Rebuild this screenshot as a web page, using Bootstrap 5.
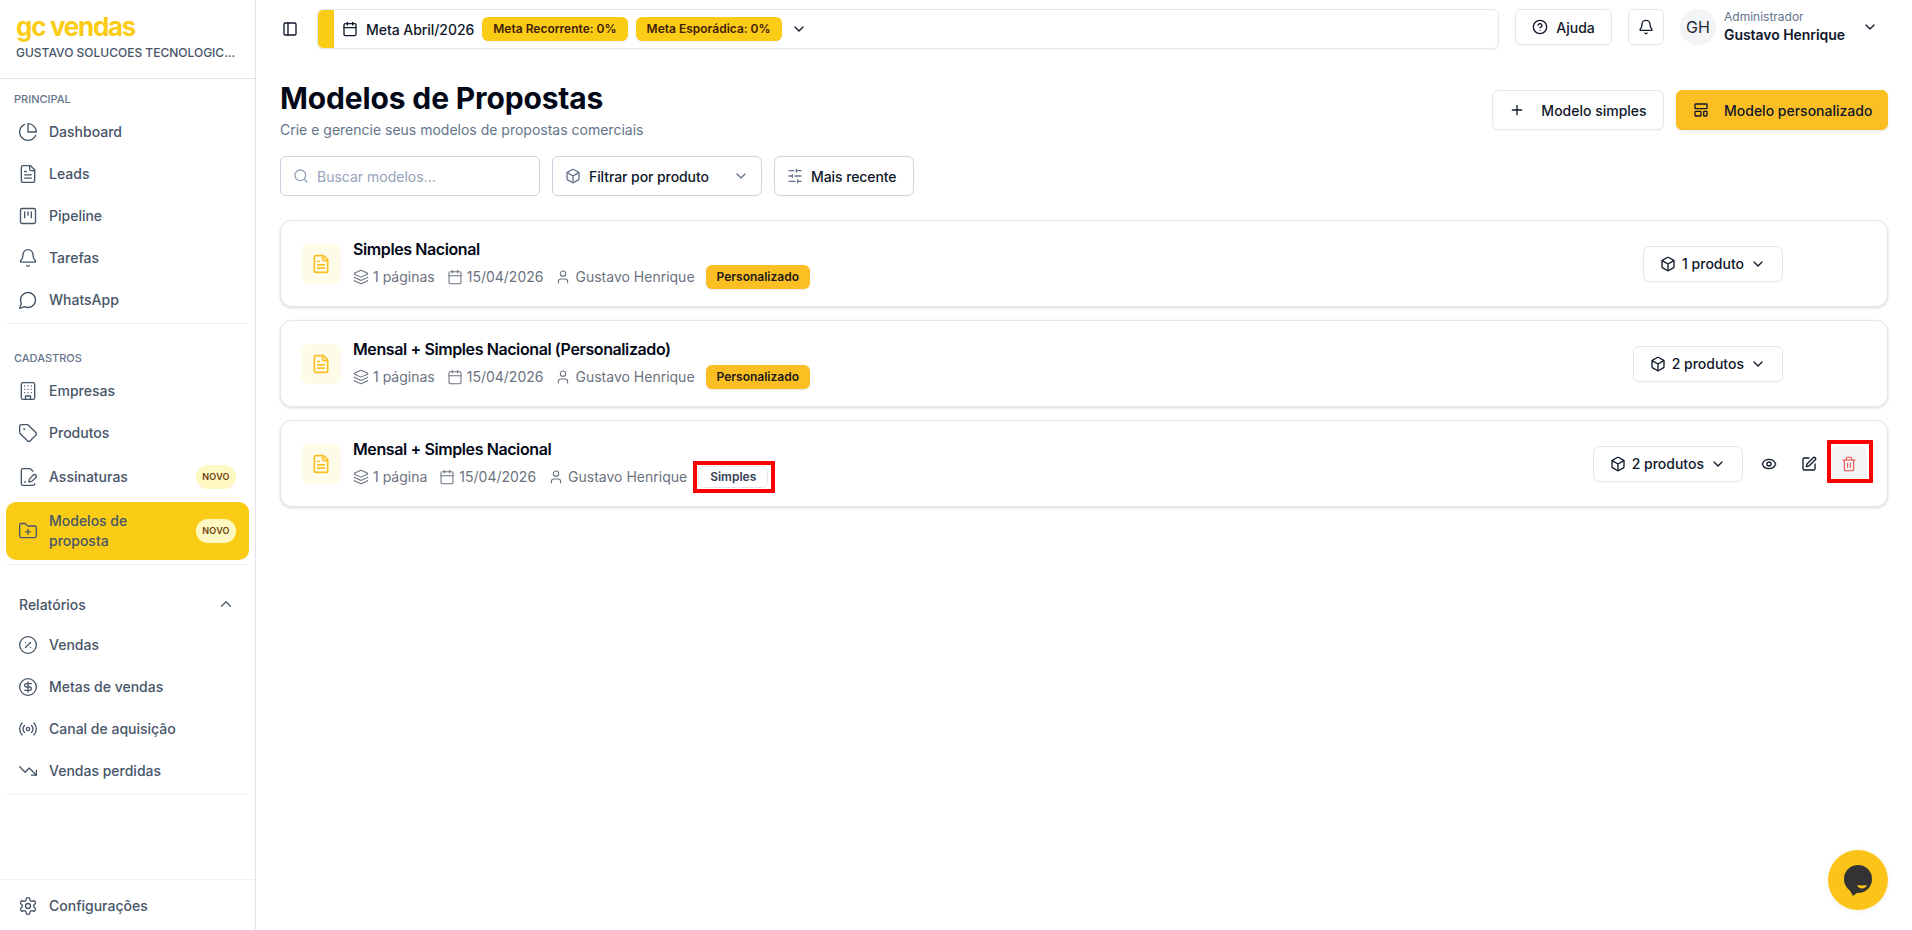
<!DOCTYPE html>
<html lang="pt-BR">
<head>
<meta charset="utf-8">
<title>Modelos de Propostas</title>
<link rel="stylesheet" href="https://cdn.jsdelivr.net/npm/bootstrap@5.3.0/dist/css/bootstrap.min.css">
<style>
html,body{height:100%}
body{font-family:Inter,"Liberation Sans",sans-serif;color:#0f172a;background:#fff;font-size:14px;overflow:hidden}
.ico{fill:none;stroke:currentColor;stroke-width:2;stroke-linecap:round;stroke-linejoin:round;flex:none}
.i16{width:16px;height:16px}.i18{width:18px;height:18px}.i20{width:20px;height:20px}
.thin{stroke-width:1.6}
.rail{width:256px;flex:none;border-right:1px solid #e2e4e9;height:930px}
.brandbox{height:79px;padding:12px 16px 0;border-bottom:1px solid #e2e4e9}
.brandname{font-size:26px;line-height:30px;font-weight:700;letter-spacing:-1.3px;color:#facc15}
.brandsub{font-size:12px;line-height:16px;font-weight:500;color:#475569;margin-top:3px;white-space:nowrap}
.navgroup{padding:0 6px}
.navhead{font-size:11px;line-height:16px;font-weight:500;color:#64748b;padding-left:10px;text-transform:uppercase}
.navhead.first{margin-top:12px;margin-bottom:4px}
.navhead.second{margin-top:26px;margin-bottom:4px}
.navitem{display:flex;align-items:center;gap:11px;height:42px;padding-left:12px;padding-right:13px;color:#475569;font-weight:500;font-size:14px;text-decoration:none;border-radius:10px;line-height:20px}
.navitem.tall{height:46px}
.navitem.sel{height:58px;margin-top:2px;background:#facc15;color:#475569}
.navitem .grow{flex:1}
.novo{background:#fef9c3;color:#713f12;font-size:9px;font-weight:600;border-radius:12px;width:40px;height:24px;display:flex;align-items:center;justify-content:center;letter-spacing:.2px}
.navrule{height:1px;background:#f1f1f1;margin:2px 0 0}
.relhead{display:flex;justify-content:space-between;align-items:center;padding:0 20px 0 19px;margin-top:29px;margin-bottom:10px;height:20px;color:#475569;font-weight:500;font-size:14px}
.railfoot{border-top:1px solid #f1f1f1;padding:5px 6px 0;margin-top:auto;height:51px}
.topstrip{height:58px;padding:9px 34px 0 0}
.toggler{width:61px;padding-left:26px;color:#0f172a;height:40px;display:flex;align-items:center}
.metabar{flex:1;height:40px;border:1px solid #e2e8f0;border-radius:6px;box-shadow:0 1px 2px rgba(0,0,0,.05);overflow:hidden;display:flex;align-items:center}
.metastrip{width:16px;height:100%;background:#facc15;margin-right:8px}
.metatitle{font-weight:500;font-size:14px;margin:0 8px 0 8px;letter-spacing:-.05px}
.metapill{background:#facc15;color:#422006;font-size:12px;font-weight:600;height:24px;line-height:24px;padding:0 11px;border-radius:6px;margin-right:8px;box-shadow:0 1px 2px rgba(0,0,0,.06)}
.metachev{margin-left:1px}
.softbtn{background:#fff;border:1px solid #e2e8f0;border-radius:6px;color:#0f172a;font-size:14px;font-weight:500;display:inline-flex;align-items:center;padding:0;white-space:nowrap;box-shadow:0 1px 1px rgba(0,0,0,.03)}
.helpbtn{width:97px;height:36px;justify-content:center;gap:8px;margin-left:16px}
.bellbtn{width:36px;height:36px;justify-content:center;margin-left:16px}
.avatarchip{width:36px;height:36px;border-radius:50%;background:#f3f4f6;margin-left:16px;font-size:16px;color:#1f2937;display:flex;align-items:center;justify-content:center}
.userbox{margin-left:8px;width:138px;line-height:18px}
.userrole{font-size:12px;color:#64748b;line-height:16px}
.username{font-size:14px;font-weight:600;line-height:20px;color:#0f172a;letter-spacing:-.05px}
.workarea{padding:0 24px}
.pagetitle{font-size:30px;line-height:36px;font-weight:700;color:#020817;margin:22px 0 4px;letter-spacing:-.15px}
.pagesub{font-size:14px;line-height:20px;color:#64748b;margin:0}
.headbtn{height:40px;font-size:14px;font-weight:500;padding:0 16px}
.btnsimple{width:172px;justify-content:center;gap:16px;margin-right:12px}
.btncustom{width:212px;gap:15px;background:#fbbf24;border-color:#fbbf24;box-shadow:0 1px 3px rgba(0,0,0,.1)}
.toolsrow{margin-top:16px;gap:12px}
.searchfield{width:260px;height:40px;border:1px solid #cbd5e1;border-radius:6px;padding:0 12px;gap:8px;color:#94a3b8;display:flex;align-items:center;font-size:14px}
.filterbtn{width:210px;height:40px;padding:0 12px;gap:8px;border-color:#cbd5e1;letter-spacing:-.08px}
.filterbtn .spread{flex:1;text-align:left}
.sortbtn{width:140px;height:40px;padding:0 12px;gap:8px;border-color:#cbd5e1;letter-spacing:-.08px}
.muted{color:#64748b}
.stack{margin-top:24px;gap:13px}
.tplcard{height:87px;border:1px solid #e5e7eb;border-radius:12px;box-shadow:0 1px 3px rgba(0,0,0,.16);background:#fff;padding:0 20px 0 20px;display:flex;align-items:center}
.fileicon{width:40px;height:40px;background:#fefce8;border-radius:8px;color:#fbbf24;display:flex;align-items:center;justify-content:center;margin-right:12px}
.tpltitle{font-size:16px;font-weight:600;line-height:24px;color:#020817;letter-spacing:-.4px;margin-top:-1px}
.tplmeta{display:flex;align-items:center;color:#6b7280;font-size:14px;line-height:24px;margin-top:4px}
.metaone{display:flex;align-items:center;gap:4px;margin-right:12px}
.tagcustom{background:#fbbf24;color:#1c1917;font-size:12px;font-weight:600;padding:0 11px;height:24px;line-height:24px;border-radius:6px;margin-left:-1px;box-shadow:0 1px 2px rgba(0,0,0,.1)}
.tagplain{position:relative;background:#fff;border:1px solid #e2e8f0;color:#334155;font-size:12px;font-weight:600;padding:0 11px;height:22px;line-height:20px;border-radius:6px;margin-left:-1px}
.tagplain::after{content:"";position:absolute;left:-6px;right:-8px;top:-6px;bottom:-6px;border:4px solid #f00}
.prodbtn{height:36px;padding:0 16px;gap:6px;justify-content:center}
.prodplace{margin-right:84px}
.actbtn{width:36px;height:36px;display:flex;align-items:center;justify-content:center;color:#0f172a;border-radius:6px;margin-left:4px}
.actbtn.first{margin-left:8px}
.actbtn.danger{position:relative;color:#ef4444;background:#f3f4f6}
.actbtn.danger::after{content:"";position:absolute;left:-4px;right:-6px;top:-6px;bottom:-1px;border:4px solid #f00;border-radius:1px}
.chatbubble{position:fixed;right:24px;bottom:20px;width:60px;height:60px;border-radius:50%;background:#fcc419;box-shadow:0 1px 6px rgba(0,0,0,.06)}
</style>
</head>
<body class="d-flex">
<svg class="d-none" xmlns="http://www.w3.org/2000/svg">
<symbol id="panel" viewBox="0 0 24 24"><rect x="3" y="3" width="18" height="18" rx="2"/><path d="M9 3v18"/></symbol>
<symbol id="cal" viewBox="0 0 24 24"><path d="M8 2v4M16 2v4"/><rect x="3" y="4" width="18" height="18" rx="2"/><path d="M3 10h18"/></symbol>
<symbol id="down" viewBox="0 0 24 24"><path d="m6 9 6 6 6-6"/></symbol>
<symbol id="up" viewBox="0 0 24 24"><path d="m18 15-6-6-6 6"/></symbol>
<symbol id="help" viewBox="0 0 24 24"><circle cx="12" cy="12" r="10"/><path d="M9.09 9a3 3 0 0 1 5.83 1c0 2-3 3-3 3M12 17h.01"/></symbol>
<symbol id="bell" viewBox="0 0 24 24"><path d="M10.268 21a2 2 0 0 0 3.464 0"/><path d="M3.262 15.326A1 1 0 0 0 4 17h16a1 1 0 0 0 .74-1.673C19.41 13.956 18 12.499 18 8A6 6 0 0 0 6 8c0 4.499-1.411 5.956-2.738 7.326"/></symbol>
<symbol id="plus" viewBox="0 0 24 24"><path d="M5 12h14M12 5v14"/></symbol>
<symbol id="tmpl" viewBox="0 0 24 24"><rect x="3" y="3" width="18" height="7" rx="1"/><rect x="3" y="14" width="9" height="7" rx="1"/><rect x="16" y="14" width="5" height="7" rx="1"/></symbol>
<symbol id="search" viewBox="0 0 24 24"><circle cx="11" cy="11" r="8"/><path d="m21 21-4.3-4.3"/></symbol>
<symbol id="box" viewBox="0 0 24 24"><path d="M21 8a2 2 0 0 0-1-1.730l-7-4a2 2 0 0 0-2 0l-7 4A2 2 0 0 0 3 8v8a2 2 0 0 0 1 1.730l7 4a2 2 0 0 0 2 0l7-4A2 2 0 0 0 21 16Z"/><path d="m3.300 7 8.700 5 8.700-5M12 22V12"/></symbol>
<symbol id="sliders" viewBox="0 0 24 24"><path d="M21 4h-7M10 4H3M21 12h-9M8 12H3M21 20h-5M12 20H3M14 2v4M8 10v4M16 18v4"/></symbol>
<symbol id="file" viewBox="0 0 24 24"><path d="M15 2H6a2 2 0 0 0-2 2v16a2 2 0 0 0 2 2h12a2 2 0 0 0 2-2V7Z"/><path d="M14 2v4a2 2 0 0 0 2 2h4M10 9H8M16 13H8M16 17H8"/></symbol>
<symbol id="layers" viewBox="0 0 24 24"><path d="M12.83 2.18a2 2 0 0 0-1.66 0L2.6 6.08a1 1 0 0 0 0 1.83l8.58 3.91a2 2 0 0 0 1.66 0l8.58-3.9a1 1 0 0 0 0-1.83Z"/><path d="M2 12a1 1 0 0 0 .58.91l8.6 3.91a2 2 0 0 0 1.65 0l8.58-3.9A1 1 0 0 0 22 12"/><path d="M2 17a1 1 0 0 0 .58.91l8.6 3.91a2 2 0 0 0 1.65 0l8.58-3.9A1 1 0 0 0 22 17"/></symbol>
<symbol id="user" viewBox="0 0 24 24"><path d="M19 21v-2a4 4 0 0 0-4-4H9a4 4 0 0 0-4 4v2"/><circle cx="12" cy="7" r="4"/></symbol>
<symbol id="eye" viewBox="0 0 24 24"><path d="M2.062 12.348a1 1 0 0 1 0-.696 10.75 10.75 0 0 1 19.876 0 1 1 0 0 1 0 .696 10.75 10.75 0 0 1-19.876 0"/><circle cx="12" cy="12" r="3"/></symbol>
<symbol id="pen" viewBox="0 0 24 24"><path d="M12 3H5a2 2 0 0 0-2 2v14a2 2 0 0 0 2 2h14a2 2 0 0 0 2-2v-7"/><path d="M18.375 2.625a1 1 0 0 1 3 3l-9.013 9.014a2 2 0 0 1-.853.505l-2.873.84a.5.5 0 0 1-.62-.62l.84-2.873a2 2 0 0 1 .506-.852z"/></symbol>
<symbol id="trash" viewBox="0 0 24 24"><path d="M3 6h18M19 6v14c0 1-1 2-2 2H7c-1 0-2-1-2-2V6M8 6V4c0-1 1-2 2-2h4c1 0 2 1 2 2v2M10 11v6M14 11v6"/></symbol>
<symbol id="pie" viewBox="0 0 24 24"><path d="M21.21 15.89A10 10 0 1 1 8 2.83"/><path d="M22 12A10 10 0 0 0 12 2v10z"/></symbol>
<symbol id="kanban" viewBox="0 0 24 24"><rect x="3" y="3" width="18" height="18" rx="2"/><path d="M8 7v7M12 7v4M16 7v7"/></symbol>
<symbol id="chat" viewBox="0 0 24 24"><path d="M7.9 20A9 9 0 1 0 4 16.1L2 22Z"/></symbol>
<symbol id="build" viewBox="0 0 24 24"><rect x="4" y="2" width="16" height="20" rx="2"/><path d="M9 22v-4h6v4M8 6h.01M16 6h.01M12 6h.01M12 10h.01M12 14h.01M16 10h.01M16 14h.01M8 10h.01M8 14h.01"/></symbol>
<symbol id="tag" viewBox="0 0 24 24"><path d="M12.586 2.586A2 2 0 0 0 11.172 2H4a2 2 0 0 0-2 2v7.172a2 2 0 0 0 .586 1.414l8.704 8.704a2.426 2.426 0 0 0 3.42 0l6.58-6.58a2.426 2.426 0 0 0 0-3.42z"/><circle cx="7.5" cy="7.5" r=".5"/></symbol>
<symbol id="filepen" viewBox="0 0 24 24"><path d="m18 5-2.414-2.414A2 2 0 0 0 14.172 2H6a2 2 0 0 0-2 2v16a2 2 0 0 0 2 2h12a2 2 0 0 0 2-2"/><path d="M21.378 12.626a1 1 0 0 0-3.004-3.004l-4.01 4.012a2 2 0 0 0-.506.854l-.837 2.87a.5.5 0 0 0 .62.62l2.87-.837a2 2 0 0 0 .854-.506zM8 18h1"/></symbol>
<symbol id="folder" viewBox="0 0 24 24"><path d="M12 10v6M9 13h6"/><path d="M20 20a2 2 0 0 0 2-2V8a2 2 0 0 0-2-2h-7.9a2 2 0 0 1-1.69-.9L9.6 3.9A2 2 0 0 0 7.93 3H4a2 2 0 0 0-2 2v13a2 2 0 0 0 2 2Z"/></symbol>
<symbol id="percent" viewBox="0 0 24 24"><circle cx="12" cy="12" r="10"/><path d="m15 9-6 6M9 9h.01M15 15h.01"/></symbol>
<symbol id="dollar" viewBox="0 0 24 24"><circle cx="12" cy="12" r="10"/><path d="M16 8h-6a2 2 0 1 0 0 4h4a2 2 0 1 1 0 4H8M12 18V6"/></symbol>
<symbol id="radio" viewBox="0 0 24 24"><path d="M4.9 19.1C1 15.2 1 8.8 4.9 4.9M7.8 16.2c-2.3-2.3-2.3-6.1 0-8.5"/><circle cx="12" cy="12" r="2"/><path d="M16.2 7.8c2.3 2.3 2.3 6.1 0 8.5M19.1 4.9C23 8.8 23 15.1 19.1 19"/></symbol>
<symbol id="trend" viewBox="0 0 24 24"><path d="M22 17 13.5 8.5l-5 5L2 7"/><path d="M16 17h6v-6"/></symbol>
<symbol id="gear" viewBox="0 0 24 24"><path d="M12.22 2h-.44a2 2 0 0 0-2 2v.18a2 2 0 0 1-1 1.73l-.43.25a2 2 0 0 1-2 0l-.15-.08a2 2 0 0 0-2.73.73l-.22.38a2 2 0 0 0 .73 2.73l.15.1a2 2 0 0 1 1 1.72v.51a2 2 0 0 1-1 1.74l-.15.09a2 2 0 0 0-.73 2.73l.22.38a2 2 0 0 0 2.73.73l.15-.08a2 2 0 0 1 2 0l.43.25a2 2 0 0 1 1 1.73V20a2 2 0 0 0 2 2h.44a2 2 0 0 0 2-2v-.18a2 2 0 0 1 1-1.73l.43-.25a2 2 0 0 1 2 0l.15.08a2 2 0 0 0 2.73-.73l.22-.39a2 2 0 0 0-.73-2.73l-.15-.08a2 2 0 0 1-1-1.74v-.5a2 2 0 0 1 1-1.74l.15-.09a2 2 0 0 0 .73-2.73l-.22-.38a2 2 0 0 0-2.73-.73l-.15.08a2 2 0 0 1-2 0l-.43-.25a2 2 0 0 1-1-1.73V4a2 2 0 0 0-2-2z"/><circle cx="12" cy="12" r="3"/></symbol>
</svg>

<aside class="rail d-flex flex-column">
  <div class="brandbox">
    <div class="brandname">gc vendas</div>
    <div class="brandsub">GUSTAVO SOLUCOES TECNOLOGIC...</div>
  </div>
  <div class="navhead first ms-1">Principal</div>
  <nav class="navgroup">
    <a class="navitem" href="#"><svg class="ico thin i20"><use href="#pie"/></svg>Dashboard</a>
    <a class="navitem" href="#"><svg class="ico thin i20"><use href="#file"/></svg>Leads</a>
    <a class="navitem" href="#"><svg class="ico thin i20"><use href="#kanban"/></svg>Pipeline</a>
    <a class="navitem" href="#"><svg class="ico thin i20"><use href="#bell"/></svg>Tarefas</a>
    <a class="navitem" href="#"><svg class="ico thin i20"><use href="#chat"/></svg>WhatsApp</a>
    <div class="navrule"></div>
  </nav>
  <div class="navhead second ms-1">Cadastros</div>
  <nav class="navgroup">
    <a class="navitem" href="#"><svg class="ico thin i20"><use href="#build"/></svg>Empresas</a>
    <a class="navitem" href="#"><svg class="ico thin i20"><use href="#tag"/></svg>Produtos</a>
    <a class="navitem tall" href="#"><svg class="ico thin i20"><use href="#filepen"/></svg><span class="grow">Assinaturas</span><span class="novo">NOVO</span></a>
    <a class="navitem sel" href="#"><svg class="ico thin i20"><use href="#folder"/></svg><span class="grow">Modelos de<br>proposta</span><span class="novo">NOVO</span></a>
    <div class="navrule mt-1"></div>
  </nav>
  <div class="relhead"><span>Relatórios</span><svg class="ico thin i18"><use href="#up"/></svg></div>
  <nav class="navgroup">
    <a class="navitem" href="#"><svg class="ico thin i20"><use href="#percent"/></svg>Vendas</a>
    <a class="navitem" href="#"><svg class="ico thin i20"><use href="#dollar"/></svg>Metas de vendas</a>
    <a class="navitem" href="#"><svg class="ico thin i20"><use href="#radio"/></svg>Canal de aquisição</a>
    <a class="navitem" href="#"><svg class="ico thin i20"><use href="#trend"/></svg>Vendas perdidas</a>
    <div class="navrule"></div>
  </nav>
  <div class="railfoot">
    <a class="navitem" href="#"><svg class="ico thin i20"><use href="#gear"/></svg>Configurações</a>
  </div>
</aside>

<main class="flex-grow-1 d-flex flex-column min-w-0">
  <header class="topstrip d-flex align-items-start">
    <div class="toggler"><svg class="ico i16"><use href="#panel"/></svg></div>
    <div class="metabar">
      <span class="metastrip"></span>
      <svg class="ico i16"><use href="#cal"/></svg>
      <span class="metatitle">Meta Abril/2026</span>
      <span class="metapill">Meta Recorrente: 0%</span>
      <span class="metapill">Meta Esporádica: 0%</span>
      <svg class="ico i16 metachev"><use href="#down"/></svg>
    </div>
    <button class="softbtn helpbtn"><svg class="ico i16"><use href="#help"/></svg>Ajuda</button>
    <button class="softbtn bellbtn"><svg class="ico i16"><use href="#bell"/></svg></button>
    <div class="avatarchip">GH</div>
    <div class="userbox"><div class="userrole">Administrador</div><div class="username">Gustavo Henrique</div></div>
    <div class="d-flex align-items-center" style="height:36px"><svg class="ico i16"><use href="#down"/></svg></div>
  </header>

  <section class="workarea">
    <div class="d-flex justify-content-between align-items-start">
      <div>
        <h1 class="pagetitle">Modelos de Propostas</h1>
        <p class="pagesub">Crie e gerencie seus modelos de propostas comerciais</p>
      </div>
      <div class="d-flex" style="margin-top:32px">
        <button class="softbtn headbtn btnsimple"><svg class="ico i16"><use href="#plus"/></svg>Modelo simples</button>
        <button class="softbtn headbtn btncustom"><svg class="ico i16"><use href="#tmpl"/></svg>Modelo personalizado</button>
      </div>
    </div>

    <div class="d-flex toolsrow">
      <div class="searchfield"><svg class="ico i16"><use href="#search"/></svg>Buscar modelos...</div>
      <button class="softbtn filterbtn"><svg class="ico i16 muted"><use href="#box"/></svg><span class="spread">Filtrar por produto</span><svg class="ico i16 muted"><use href="#down"/></svg></button>
      <button class="softbtn sortbtn"><svg class="ico i16 muted"><use href="#sliders"/></svg>Mais recente</button>
    </div>

    <div class="d-flex flex-column stack">
      <article class="tplcard">
        <div class="fileicon"><svg class="ico i20"><use href="#file"/></svg></div>
        <div class="flex-grow-1">
          <div class="tpltitle">Simples Nacional</div>
          <div class="tplmeta">
            <span class="metaone"><svg class="ico thin i16"><use href="#layers"/></svg>1 páginas</span>
            <span class="metaone"><svg class="ico thin i16"><use href="#cal"/></svg>15/04/2026</span>
            <span class="metaone"><svg class="ico thin i16"><use href="#user"/></svg>Gustavo Henrique</span>
            <span class="tagcustom">Personalizado</span>
          </div>
        </div>
        <button class="softbtn prodbtn prodplace"><svg class="ico i16"><use href="#box"/></svg><span>1 produto</span><svg class="ico i16"><use href="#down"/></svg></button>
      </article>
      <article class="tplcard">
        <div class="fileicon"><svg class="ico i20"><use href="#file"/></svg></div>
        <div class="flex-grow-1">
          <div class="tpltitle">Mensal + Simples Nacional (Personalizado)</div>
          <div class="tplmeta">
            <span class="metaone"><svg class="ico thin i16"><use href="#layers"/></svg>1 páginas</span>
            <span class="metaone"><svg class="ico thin i16"><use href="#cal"/></svg>15/04/2026</span>
            <span class="metaone"><svg class="ico thin i16"><use href="#user"/></svg>Gustavo Henrique</span>
            <span class="tagcustom">Personalizado</span>
          </div>
        </div>
        <button class="softbtn prodbtn prodplace"><svg class="ico i16"><use href="#box"/></svg><span>2 produtos</span><svg class="ico i16"><use href="#down"/></svg></button>
      </article>
      <article class="tplcard">
        <div class="fileicon"><svg class="ico i20"><use href="#file"/></svg></div>
        <div class="flex-grow-1">
          <div class="tpltitle">Mensal + Simples Nacional</div>
          <div class="tplmeta">
            <span class="metaone"><svg class="ico thin i16"><use href="#layers"/></svg>1 página</span>
            <span class="metaone"><svg class="ico thin i16"><use href="#cal"/></svg>15/04/2026</span>
            <span class="metaone"><svg class="ico thin i16"><use href="#user"/></svg>Gustavo Henrique</span>
            <span class="tagplain">Simples</span>
          </div>
        </div>
        <button class="softbtn prodbtn"><svg class="ico i16"><use href="#box"/></svg><span>2 produtos</span><svg class="ico i16"><use href="#down"/></svg></button>
        <div class="actbtn first"><svg class="ico i16"><use href="#eye"/></svg></div>
        <div class="actbtn"><svg class="ico i16"><use href="#pen"/></svg></div>
        <div class="actbtn danger"><svg class="ico thin i16"><use href="#trash"/></svg></div>
      </article>
    </div>
  </section>
</main>

<div class="chatbubble">
  <svg width="60" height="60" viewBox="0 0 60 60"><circle cx="30" cy="29" r="14" fill="#333"/><path d="M21 39 25 46 30 42Z" fill="#333"/><path d="M29 35c3 .6 7 .6 10 0-1 2.500-3 3.500-5 3.500s-4-1-5-3.500Z" fill="#fcc419"/></svg>
</div>
<script src="https://cdn.jsdelivr.net/npm/bootstrap@5.3.0/dist/js/bootstrap.bundle.min.js"></script>
</body>
</html>
